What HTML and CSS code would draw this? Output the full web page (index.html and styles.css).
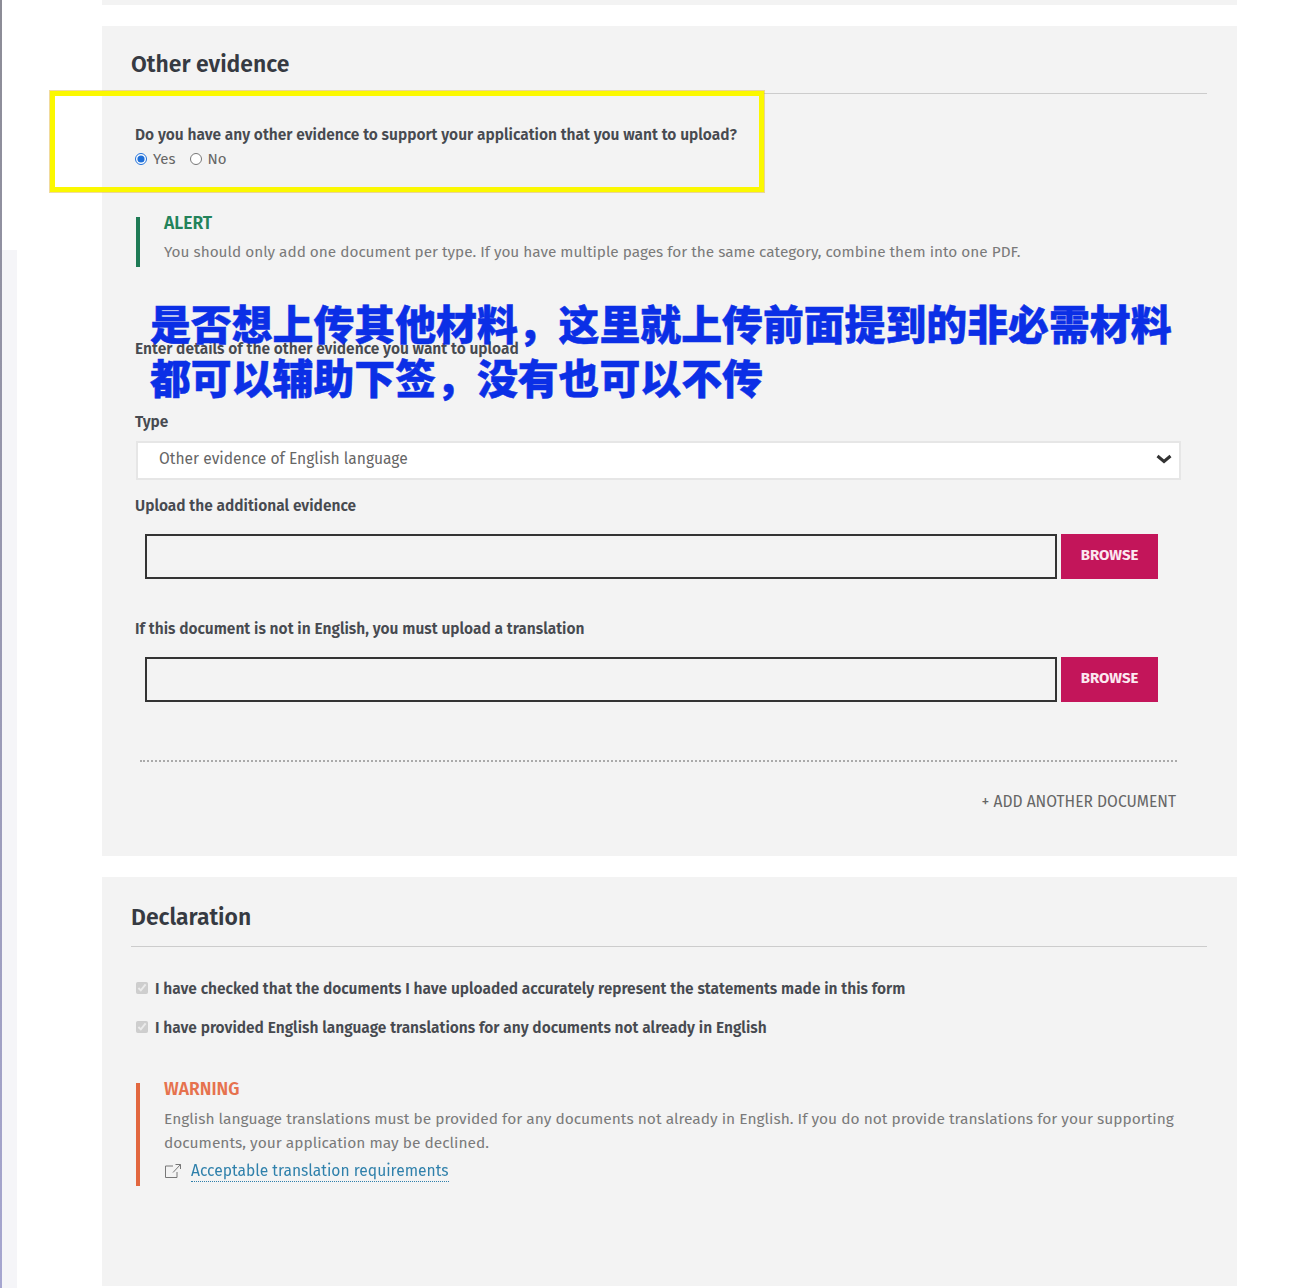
FILE: index.html
```html
<!DOCTYPE html>
<html lang="en">
<head>
<meta charset="utf-8">
<title>Other evidence</title>
<link rel="stylesheet" href="styles.css">
</head>
<body>
<div class="rail"></div>
<div class="side-panel"></div>
<main class="page">
  <div class="sliver"></div>
  <section class="card evidence">
    <div class="highlight"></div>
    <h2 class="card-title">Other evidence</h2>
    <div class="rule"></div>
    <div class="question">
      <div class="label">Do you have any other evidence to support your application that you want to upload?</div>
      <div class="radios">
        <label class="opt"><input type="radio" name="other" checked>Yes</label>
        <label class="opt"><input type="radio" name="other">No</label>
      </div>
    </div>
    <div class="notice alert">
      <div class="notice-title">ALERT</div>
      <div class="notice-text">You should only add one document per type. If you have multiple pages for the same category, combine them into one PDF.</div>
    </div>
    <div class="label details">Enter details of the other evidence you want to upload
      <div class="cn">是否想上传其他材料，这里就上传前面提到的非必需材料<br>都可以辅助下签，没有也可以不传</div>
    </div>
    <div class="label type-label">Type</div>
    <div class="select">
      <span>Other evidence of English language</span>
      <svg width="16" height="10" viewBox="0 0 16 10"><path d="M1.500 2l6.500 5.500L14.500 2" fill="none" stroke="#333" stroke-width="3"/></svg>
    </div>
    <div class="label upload-label">Upload the additional evidence</div>
    <div class="file-row"><div class="file-box"></div><div class="browse">BROWSE</div></div>
    <div class="label trans-label">If this document is not in English, you must upload a translation</div>
    <div class="file-row"><div class="file-box"></div><div class="browse">BROWSE</div></div>
    <div class="dots"></div>
    <div class="add">+ ADD ANOTHER DOCUMENT</div>
  </section>
  <section class="card declaration">
    <h2 class="card-title">Declaration</h2>
    <div class="rule"></div>
    <label class="check first"><input type="checkbox" checked disabled><span>I have checked that the documents I have uploaded accurately represent the statements made in this form</span></label>
    <label class="check second"><input type="checkbox" checked disabled><span>I have provided English language translations for any documents not already in English</span></label>
    <div class="notice warning">
      <div class="notice-title">WARNING</div>
      <div class="notice-text">English language translations must be provided for any documents not already in English. If you do not provide translations for your supporting documents, your application may be declined.</div>
      <div class="ext">
        <svg width="18" height="16" viewBox="0 0 18 16"><path d="M9 3H1.500V14.500H13V9M9 9.500L16.500 1.500M11.500 1.500H16.500V6" fill="none" stroke="#777" stroke-width="1"/></svg>
        <a>Acceptable translation requirements</a>
      </div>
    </div>
  </section>
</main>
</body>
</html>
```
FILE: styles.css
```css
html, body { margin: 0; padding: 0; }
body { width: 1298px; height: 1288px; overflow: hidden; background: #fff; font-family: "Fira Sans", "Open Sans", "Noto Sans", sans-serif; color: #333; position: relative; }
.rail { position: absolute; left: 0; top: 0; width: 2px; height: 1288px; background: linear-gradient(#8c8c96, #a6a6d0); }
.side-panel { position: absolute; left: 2px; top: 250px; width: 15px; height: 1038px; background: #f5f5f8; }
.page { width: 1135px; margin-left: 102px; filter: blur(0.4px); }
.sliver { height: 5px; background: #f3f3f3; }
.card { background: #f3f3f3; box-sizing: border-box; position: relative; padding: 0 30px 0 29px; overflow: visible; }
.evidence { margin-top: 21px; height: 830px; padding-top: 24px; }
.declaration { margin-top: 21px; height: 409px; padding-top: 26px; }
.card-title { margin: 0; font-size: 22.900px; font-weight: 600; line-height: 30px; color: #363a42; }
.rule { height: 1px; background: #ccc; margin-top: 13px; }
.highlight { position: absolute; left: -52px; top: 65px; width: 714px; height: 101px; box-sizing: border-box; border: 5px solid #fbf800; box-shadow: 0 0 0 1px rgba(225, 175, 40, 0.45); }
.label { font-size: 15.500px; font-weight: 600; line-height: 20px; color: #474a50; margin-left: 4px; }
.question { margin-top: 31px; }
.radios { display: flex; align-items: center; margin: 4px 0 0 4px; font-size: 15px; color: #666; line-height: 20px; gap: 14px; }
.opt { display: flex; align-items: center; gap: 6px; }
.opt input { margin: 0; width: 12px; height: 12px; accent-color: #1f6fd8; }
.notice { border-left: 4px solid; padding-left: 24px; margin-left: 5px; box-sizing: border-box; }
.alert { margin-top: 48px; height: 50px; border-color: #1e7a55; }
.notice-title { font-size: 17.500px; font-weight: 600; line-height: 14px; }
.alert .notice-title { color: #23835a; }
.notice-text { font-size: 15.500px; line-height: 24px; color: #7a7a7a; }
.alert .notice-text { font-size: 15.350px; margin-top: 9px; white-space: nowrap; }
.details { position: relative; margin-top: 72px; }
.cn { position: absolute; left: 15px; top: -43px; font-family: "Noto Sans CJK SC", sans-serif; font-weight: 900; font-size: 40.860px; line-height: 54px; color: #0b2fe6; white-space: nowrap; -webkit-text-stroke: 0.5px #0b2fe6; }
.type-label { margin-top: 53px; }
.select { margin: 9px 0 0 5px; width: 1045px; height: 39px; box-sizing: border-box; background: #fff; border: 2px solid #e6e6e6; padding: 0 7px 3px 21px; display: flex; align-items: center; justify-content: space-between; font-size: 15.600px; color: #666; }
.select span { margin-bottom: 2px; }
.upload-label { margin-top: 16px; }
.trans-label { margin-top: 40px; }
.file-row { display: flex; gap: 4px; margin: 18px 0 0 14px; }
.file-box { width: 912px; height: 45px; box-sizing: border-box; border: 2px solid #333; background: #f3f3f3; }
.browse { width: 97px; height: 45px; box-sizing: border-box; padding-bottom: 4px; background: #c3155a; color: #fbe8f0; font-size: 15px; font-weight: 700; display: flex; align-items: center; justify-content: center; }
.dots { margin: 58px 0 0 9px; width: 1037px; border-top: 2px dotted #aaa; }
.add { margin: 30px 31px 0 0; text-align: right; font-size: 15.600px; line-height: 20px; color: #666; }
.check { display: flex; align-items: center; gap: 7px; margin-left: 5px; font-size: 15.500px; font-weight: 600; line-height: 20px; color: #474a50; white-space: nowrap; }
.check input { margin: -2px 0 0; width: 12px; height: 12px; }
.first { margin-top: 32px; }
.second { margin-top: 19px; }
.warning { margin-top: 45px; height: 103px; width: 1040px; border-color: #e2673f; }
.warning .notice-title { color: #e6724e; }
.warning .notice-text { margin-top: 10px; }
.ext { display: flex; align-items: center; gap: 9px; margin-top: 5px; }
.ext a { font-size: 15.600px; color: #2f80ab; border-bottom: 1px dotted #2f80ab; line-height: 21px; }
```
